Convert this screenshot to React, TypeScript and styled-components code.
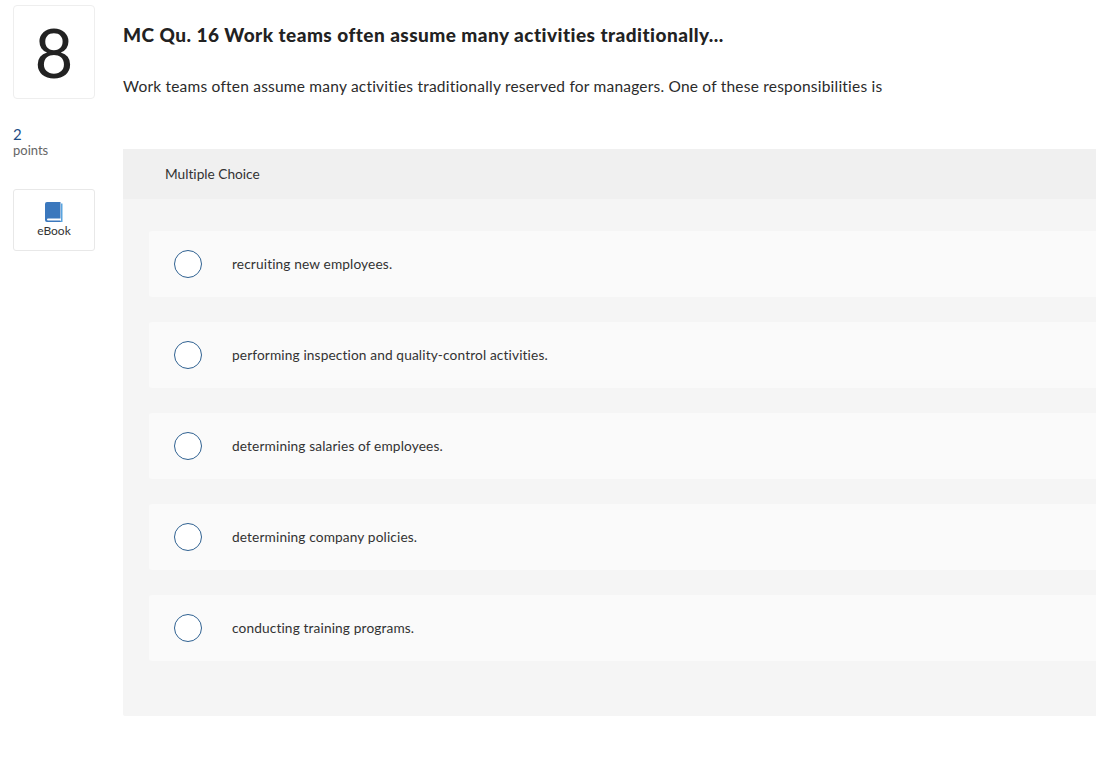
import React from "react";
import styled, { createGlobalStyle } from "styled-components";

const Global = createGlobalStyle`
  html, body { margin: 0; padding: 0; background: #fff; overflow: hidden; }
  body {
    font-family: Lato, "Open Sans", "Liberation Sans", sans-serif;
    font-variant-ligatures: none;
    color: #222;
  }
`;

const Page = styled.div`
  display: flex;
  align-items: flex-start;
  width: 1096px;
  height: 773px;
  overflow: hidden;
  padding: 5px 0 0 13px;
  box-sizing: border-box;
`;

const Sidebar = styled.aside`
  flex: 0 0 82px;
  width: 82px;
  margin-right: 28px;
  display: flex;
  flex-direction: column;
`;

const NumberCard = styled.div`
  height: 94px;
  box-sizing: border-box;
  border: 1px solid #eeeeee;
  border-radius: 4px;
  display: flex;
  align-items: center;
  justify-content: center;
  font-weight: 400;
  font-size: 67px;
  line-height: 1;
  color: #222;
`;

const PointsValue = styled.div`
  margin-top: 27px;
  font-size: 15px;
  line-height: 16px;
  color: #1f4e86;
`;

const PointsLabel = styled.div`
  font-size: 13px;
  line-height: 16px;
  color: #666;
`;

const EbookButton = styled.div`
  margin-top: 31px;
  height: 62px;
  box-sizing: border-box;
  border: 1px solid #e8e8e8;
  border-radius: 3px;
  display: flex;
  flex-direction: column;
  align-items: center;
  padding-top: 12px;
  gap: 1px;
  font-size: 12px;
  line-height: 15px;
  color: #333;
  svg { display: block; }
`;

const Main = styled.main`
  flex: 1;
  min-width: 0;
`;

const Title = styled.h2`
  margin: 18px 0 0;
  font-size: 19px;
  line-height: 24px;
  font-weight: 900;
  letter-spacing: 0.46px;
  color: #222;
  white-space: nowrap;
`;

const Prompt = styled.p`
  margin: 29px 0 0;
  font-size: 15.5px;
  letter-spacing: 0.21px;
  line-height: 20px;
  color: #2b2b2b;
  white-space: nowrap;
`;

const Panel = styled.section`
  margin-top: 53px;
  height: 567px;
  background: #f5f5f5;
  border-radius: 2px 0 0 2px;
`;

const PanelHeader = styled.div`
  height: 50px;
  box-sizing: border-box;
  background: #f0f0f0;
  padding: 0 0 2px 42px;
  display: flex;
  align-items: center;
  font-size: 13.7px;
  color: #333;
`;

const Options = styled.div`
  display: flex;
  flex-direction: column;
  gap: 25px;
  padding: 32px 0 0 26px;
`;

const Option = styled.div`
  height: 66px;
  background: #fafafa;
  border-radius: 3px 0 0 3px;
  display: flex;
  align-items: center;
  padding-left: 25px;
`;

const Radio = styled.span`
  flex: 0 0 28px;
  width: 28px;
  height: 28px;
  box-sizing: border-box;
  border: 1.5px solid #2f6191;
  border-radius: 50%;
  background: #fff;
  margin-right: 30px;
`;

const OptionText = styled.span`
  padding-bottom: 2px;
  font-size: 13.7px;
  letter-spacing: 0.13px;
  color: #333;
  white-space: nowrap;
`;

const options = [
  "recruiting new employees.",
  "performing inspection and quality-control activities.",
  "determining salaries of employees.",
  "determining company policies.",
  "conducting training programs.",
];

export default function App() {
  return (
    <>
      <Global />
      <Page>
        <Sidebar>
          <NumberCard>8</NumberCard>
          <PointsValue>2</PointsValue>
          <PointsLabel>points</PointsLabel>
          <EbookButton>
            <svg width="18" height="20" viewBox="0 0 18 20" aria-hidden="true">
              <path d="M16 1.5h1.5V20H3.5v-1H16z" fill="#5aa5e0" />
              <path d="M2 0h13.5v16.5H3a1 1 0 0 0 0 2h12.5V20H2a2 2 0 0 1-2-2V2a2 2 0 0 1 2-2z" fill="#3b78bd" />
            </svg>
            eBook
          </EbookButton>
        </Sidebar>
        <Main>
          <Title>MC Qu. 16 Work teams often assume many activities traditionally...</Title>
          <Prompt>Work teams often assume many activities traditionally reserved for managers. One of these responsibilities is</Prompt>
          <Panel>
            <PanelHeader>Multiple Choice</PanelHeader>
            <Options>
              {options.map((o) => (
                <Option key={o}>
                  <Radio />
                  <OptionText>{o}</OptionText>
                </Option>
              ))}
            </Options>
          </Panel>
        </Main>
      </Page>
    </>
  );
}
